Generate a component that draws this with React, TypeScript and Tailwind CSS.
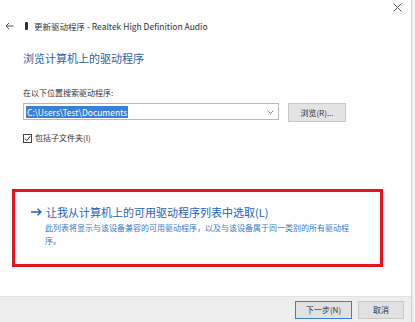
import React from 'react';

const font = { fontFamily: '"Microsoft YaHei", "Noto Sans CJK SC", "Noto Sans", sans-serif' };

export default function App() {
  return (
    <div className="w-[415px] h-[322px] flex bg-white overflow-hidden text-[#222]" style={font}>
      <div className="flex-1 flex flex-col">
        {/* Header */}
        <div className="h-[16px] flex justify-end pr-[9px] pt-[3px]">
          <svg width="9" height="9" viewBox="0 0 9 9" stroke="#555" strokeWidth="1">
            <path d="M0.5 0.5 L8.5 8.5 M8.5 0.5 L0.5 8.5" />
          </svg>
        </div>
        <div className="flex items-center h-[20px] pl-[5px] text-[8.5px] text-[#333]">
          <svg width="9" height="8" viewBox="0 0 9 8" stroke="#555" strokeWidth="1" fill="none">
            <path d="M8.5 4 H1 M4 1 L1 4 L4 7" />
          </svg>
          <span className="w-[3px] h-[8px] bg-[#333] ml-[11px] mr-[6px] rounded-[1px]" />
          <span>更新驱动程序 - Realtek High Definition Audio</span>
        </div>

        {/* Body */}
        <div className="pl-[23px] pt-[15px]">
          <div className="text-[11px] leading-[14px] text-[#2f62ad]">浏览计算机上的驱动程序</div>
          <div className="text-[8px] leading-[11px] mt-[22px] text-[#333]">在以下位置搜索驱动程序:</div>
          <div className="flex items-start mt-[5px] gap-[9px]">
            <div className="w-[256px] h-[17px] border border-[#b9b9b9] flex items-center px-[2px]">
              <span className="bg-[#3b7fd6] text-white text-[8.5px] leading-[12px] px-[1px]">C:\Users\Test\Documents</span>
              <svg className="ml-auto mr-[2px]" width="7" height="4" viewBox="0 0 7 4" stroke="#888" strokeWidth="1" fill="none">
                <path d="M0.5 0.5 L3.5 3.5 L6.5 0.5" />
              </svg>
            </div>
            <div className="w-[58px] h-[19px] bg-[#e3e3e3] border border-[#c8c8c8] flex items-center justify-center text-[8px] text-[#333]">
              浏览(R)...
            </div>
          </div>
          <div className="flex items-center mt-[10px] gap-[3px] text-[8px] text-[#333]">
            <span className="w-[9px] h-[9px] border border-[#444] flex items-center justify-center">
              <svg width="7" height="7" viewBox="0 0 7 7" stroke="#333" strokeWidth="1" fill="none">
                <path d="M0.8 3.6 L2.8 5.6 L6.3 1.2" />
              </svg>
            </span>
            <span>包括子文件夹(I)</span>
          </div>
        </div>

        {/* Highlighted option */}
        <div className="ml-[12px] mr-[28px] mt-[45px] h-[78px] border-[3px] border-[#e8141b] pl-[16px] pt-[13px]">
          <div className="flex items-center text-[11px] leading-[14px] text-[#1f63c0]">
            <svg className="mr-[4px]" width="11" height="8" viewBox="0 0 11 8" stroke="#1f63c0" strokeWidth="1.3" fill="none">
              <path d="M0 4 H10 M6.5 0.7 L10 4 L6.5 7.3" />
            </svg>
            <span>让我从计算机上的可用驱动程序列表中选取(L)</span>
          </div>
          <div className="ml-[14px] w-[314px] mt-[2px] text-[8px] leading-[13px] text-[#3b78c8]">
            此列表将显示与该设备兼容的可用驱动程序，以及与该设备属于同一类别的所有驱动程序。
          </div>
        </div>

        <div className="flex-1" />

        {/* Footer */}
        <div className="h-[26px] bg-[#efeeee] border-t border-[#e2e2e2] flex items-center justify-end gap-[6px] pr-[7px]">
          <div className="w-[57px] h-[18px] bg-[#e1e1e1] border border-[#3c7fd0] flex items-center justify-center text-[8px] text-[#333]">
            下一步(N)
          </div>
          <div className="w-[46px] h-[18px] bg-[#e1e1e1] border border-[#c8c8c8] flex items-center justify-center text-[8px] text-[#333]">
            取消
          </div>
        </div>
      </div>
      <div className="w-[4px] border-l border-[#cfcfcf] bg-[#f0f0f0]" />
    </div>
  );
}
